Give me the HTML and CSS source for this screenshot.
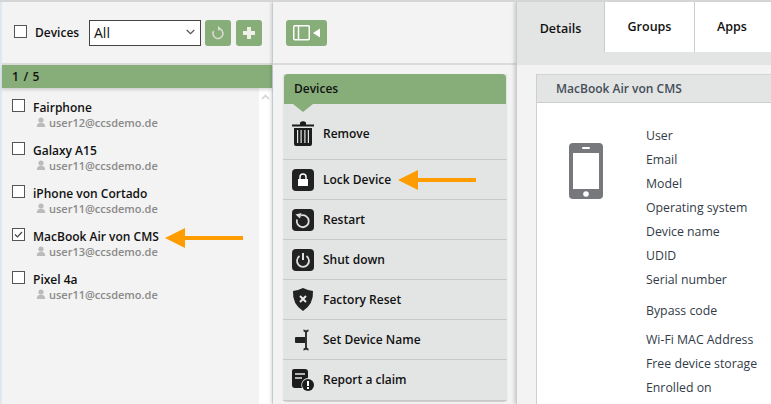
FILE: index.html
```html
<!DOCTYPE html>
<html lang="en">
<head>
<meta charset="utf-8">
<title>Devices</title>
<link rel="stylesheet" href="styles.css">
</head>
<body>
<div class="app">
  <section class="left">
    <div class="left-head">
      <span class="cb head-cb"></span>
      <span class="head-label">Devices</span>
      <div class="select"><span>All</span>
        <svg class="chev" width="9" height="6" viewBox="0 0 9 6"><path d="M.7 1l3.800 3.600L8.300 1" fill="none" stroke="#555" stroke-width="1.200"/></svg>
      </div>
      <button class="gbtn"><svg width="14" height="14" viewBox="0 0 14 14"><path d="M7.800 2.600A5 5 0 1 1 2.600 5" fill="none" stroke="#dcdcd6" stroke-width="1.500"/><path d="M7 0v5l3-2.500z" fill="#dcdcd6"/></svg></button>
      <button class="gbtn"><svg width="14" height="14" viewBox="0 0 14 14"><path d="M5 1h4v4h4v4H9v4H5V9H1V5h4z" fill="#f0f0ea"/></svg></button>
    </div>
    <div class="count">1 / 5</div>
    <div class="list-wrap">
      <div class="list">
        <div class="item"><span class="cb"></span><div><div class="name">Fairphone</div><div class="mail"><svg class="uic" viewBox="0 0 10 10"><circle cx="5" cy="3" r="2.600"/><path d="M.8 10c0-3 1.500-4.200 4.200-4.200S9.200 7 9.200 10z"/></svg>user12@ccsdemo.de</div></div></div>
        <div class="item"><span class="cb"></span><div><div class="name">Galaxy A15</div><div class="mail"><svg class="uic" viewBox="0 0 10 10"><circle cx="5" cy="3" r="2.600"/><path d="M.8 10c0-3 1.500-4.200 4.200-4.200S9.200 7 9.200 10z"/></svg>user11@ccsdemo.de</div></div></div>
        <div class="item"><span class="cb"></span><div><div class="name">iPhone von Cortado</div><div class="mail"><svg class="uic" viewBox="0 0 10 10"><circle cx="5" cy="3" r="2.600"/><path d="M.8 10c0-3 1.500-4.200 4.200-4.200S9.200 7 9.200 10z"/></svg>user11@ccsdemo.de</div></div></div>
        <div class="item"><span class="cb"><svg width="11" height="11" viewBox="0 0 11 11"><path d="M2 5.500l2.500 2.500L9 3" fill="none" stroke="#444" stroke-width="1.200"/></svg></span><div><div class="name">MacBook Air von CMS</div><div class="mail"><svg class="uic" viewBox="0 0 10 10"><circle cx="5" cy="3" r="2.600"/><path d="M.8 10c0-3 1.500-4.200 4.200-4.200S9.200 7 9.200 10z"/></svg>user13@ccsdemo.de</div></div></div>
        <div class="item"><span class="cb"></span><div><div class="name">Pixel 4a</div><div class="mail"><svg class="uic" viewBox="0 0 10 10"><circle cx="5" cy="3" r="2.600"/><path d="M.8 10c0-3 1.500-4.200 4.200-4.200S9.200 7 9.200 10z"/></svg>user11@ccsdemo.de</div></div></div>
      </div>
      <div class="scroll"><svg width="9" height="6" viewBox="0 0 9 6"><path d="M1 5l3.500-3.500L8 5" fill="none" stroke="#d4d4d4" stroke-width="1.600"/></svg></div>
    </div>
    <svg class="arrow arrow-a" width="78" height="20" viewBox="0 0 78 20"><path d="M0 10L20 0v8h58v4H20V20z" fill="#ff9c00"/></svg>
  </section>

  <section class="mid">
    <div class="mid-head">
      <button class="panel-btn"><svg width="28" height="16" viewBox="0 0 28 16"><rect x=".75" y=".75" width="15.500" height="14" rx="1" fill="none" stroke="#fff" stroke-width="1.500"/><path d="M5.500 1v14" stroke="#fff" stroke-width="1.500"/><path d="M27 3.500v9L20 8z" fill="#fff"/></svg></button>
    </div>
    <div class="menu">
      <div class="menu-title">Devices</div>
      <div class="menu-item first">
        <svg class="mi" width="22" height="25" viewBox="0 0 22 25"><path d="M0 3.500h22v2H0zM8 1.500q3-2.500 6 0v2H8zM2 7h18v16q0 2-2 2H4q-2 0-2-2zM5 9v13h1.200V9zM8.500 9v13h1.200V9zM12.300 9v13h1.200V9zM15.800 9v13H17V9z" fill="#1d1d1d" fill-rule="evenodd"/></svg>
        <span>Remove</span>
      </div>
      <div class="menu-item">
        <svg class="mi" width="22" height="22" viewBox="0 0 22 22"><rect width="22" height="22" rx="4" fill="#222"/><path d="M6 10h10v7H6z" fill="#fff"/><path d="M8 10V8a3 3 0 0 1 6 0v2" fill="none" stroke="#fff" stroke-width="1.500"/></svg>
        <span>Lock Device</span>
      </div>
      <div class="menu-item">
        <svg class="mi" width="22" height="22" viewBox="0 0 22 22"><rect width="22" height="22" rx="4" fill="#222"/><path d="M9 6.500a6 6 0 1 1-4 4" fill="none" stroke="#e0e0e0" stroke-width="1.800"/><path d="M3.500 5.500l6-1.500-1.500 5.500z" fill="#e0e0e0"/></svg>
        <span>Restart</span>
      </div>
      <div class="menu-item">
        <svg class="mi" width="22" height="22" viewBox="0 0 22 22"><rect width="22" height="22" rx="4" fill="#222"/><path d="M7.500 7a6 6 0 1 0 7 0" fill="none" stroke="#e0e0e0" stroke-width="1.800"/><path d="M11 4v7" stroke="#e0e0e0" stroke-width="2"/></svg>
        <span>Shut down</span>
      </div>
      <div class="menu-item">
        <svg class="mi" width="22" height="24" viewBox="0 0 22 24"><path d="M11 0q5 2.500 10 3 .8 13-10 20Q.2 16 1 3q5-.5 10-3z" fill="#222"/><path d="M8 8l6 6m0-6l-6 6" stroke="#e8e8e8" stroke-width="2"/></svg>
        <span>Factory Reset</span>
      </div>
      <div class="menu-item">
        <svg class="mi" width="22" height="22" viewBox="0 0 22 22"><path d="M4 8h9v6H4q-1 0-1-1V9q0-1 1-1z" fill="#222"/><path d="M11.500 1.500q1.500 0 2.500 1.500 1-1.500 2.500-1.500M14 3v16M11.500 20.500q1.500 0 2.500-1.500 1 1.500 2.500 1.500" fill="none" stroke="#222" stroke-width="1.800"/></svg>
        <span>Set Device Name</span>
      </div>
      <div class="menu-item">
        <svg class="mi" width="22" height="22" viewBox="0 0 22 22"><path d="M2 0h11q3 0 3 3v6a7 7 0 0 0-6 10H3q-3 0-3-3V2q0-2 2-2z" fill="#1d1d1d"/><path d="M3 5h10M3 9h7" stroke="#e3e5e4" stroke-width="1.500"/><circle cx="16" cy="16" r="6" fill="#1d1d1d"/><path d="M16 12v5" stroke="#fff" stroke-width="2"/><path d="M16 18v2" stroke="#fff" stroke-width="2"/></svg>
        <span>Report a claim</span>
      </div>
    </div>
    <svg class="arrow arrow-b" width="78" height="20" viewBox="0 0 78 20"><path d="M0 10L20 0v8h58v4H20V20z" fill="#ff9c00"/></svg>
  </section>

  <section class="right">
    <nav class="tabs">
      <div class="tab active">Details</div>
      <div class="tab t2">Groups</div>
      <div class="tab t3">Apps</div>
    </nav>
    <div class="tab-strip"></div>
    <div class="card">
      <div class="card-head">MacBook Air von CMS</div>
      <div class="card-body">
        <svg class="phone" width="34" height="56" viewBox="0 0 34 56"><path d="M4 0h26q4 0 4 4v48q0 4-4 4H4q-4 0-4-4V4q0-4 4-4z" fill="#77787c"/><rect x="4" y="10" width="26" height="36" fill="#fff"/><rect x="13" y="4" width="8" height="2" rx="1" fill="#fff"/><circle cx="17" cy="51" r="2.800" fill="#fff"/></svg>
        <ul class="fields">
          <li>User</li><li>Email</li><li>Model</li><li>Operating system</li><li>Device name</li><li>UDID</li><li>Serial number</li>
          <li class="gap-a">Bypass code</li><li class="gap-b">Wi-Fi MAC Address</li><li>Free device storage</li><li>Enrolled on</li>
        </ul>
      </div>
    </div>
  </section>
</div>
</body>
</html>
```

FILE: styles.css
```css
* { box-sizing: border-box; }
html, body { margin: 0; height: 100%; overflow: hidden; }
body { background: #fff; font-family: "Open Sans", "Noto Sans", sans-serif; font-size: 12px; color: #111; }
button { padding: 0; border: 0; font: inherit; }

.app { display: flex; width: 771px; height: 404px; padding-left: 2px; background: #dfe7ef; border-top: 2px solid #d5d5d5; overflow: hidden; }

.left { position: relative; flex: 0 0 270px; background: #f3f3f3; display: flex; flex-direction: column; }
.left-head { height: 63px; border-bottom: 2px solid #dadada; display: flex; align-items: flex-start; padding: 18px 0 0 12px; }
.cb { display: inline-flex; align-items: center; justify-content: center; flex: none; width: 13px; height: 13px; background: #fff; border: 1px solid #555; }
.head-cb { margin: 5px 8px 0 0; }
.head-label { margin-top: 4px; width: 54px; font-size: 12px; font-weight: 600; }
.select { width: 112px; height: 26px; background: #fff; border: 1px solid #444; display: flex; align-items: center; justify-content: space-between; padding: 0 5px 2px 4px; font-size: 14px; }
.gbtn { width: 26px; height: 26px; margin-left: 4px; background: #87ad79; border-radius: 3px; display: flex; align-items: center; justify-content: center; }
.gbtn + .gbtn { margin-left: 5px; }
.count { height: 23px; background: #87ad79; line-height: 23px; padding-left: 10px; font-weight: 600; letter-spacing: .7px; box-shadow: 0 2px 3px rgba(0,0,0,.15); position: relative; }
.list-wrap { flex: 1; display: flex; min-height: 0; }
.list { flex: 1; padding-top: 11px; }
.scroll { flex: 0 0 13px; background: #fff; display: flex; justify-content: center; align-items: flex-start; padding-top: 6px; }
.item { display: flex; height: 43px; padding-left: 10px; }
.item .cb { margin-right: 8px; }
.name { font-size: 12px; font-weight: 600; line-height: 18px; height: 16px; color: #111; }
.mail { display: flex; align-items: center; height: 14px; margin-left: 3px; font-size: 11px; font-weight: 600; color: #8a8a8a; }
.uic { width: 10px; height: 10px; margin-right: 3px; fill: #bbb; }

.arrow { position: absolute; }
.arrow-a { left: 163px; top: 226px; }
.arrow-b { left: 125px; top: 168px; }

.mid { position: relative; flex: 0 0 243px; margin-left: 1px; background: #f3f3f3; box-shadow: -2px 0 3px rgba(0,0,0,.15); }
.mid-head { height: 63px; border-bottom: 2px solid #dadada; padding: 18px 0 0 13px; }
.panel-btn { width: 41px; height: 26px; background: #87ad79; border-radius: 3px; display: flex; align-items: center; justify-content: center; }
.menu { margin: 9px 0 0 10px; width: 224px; background: #e3e5e4; border-radius: 0 0 4px 4px; box-shadow: 0 1px 1px rgba(0,0,0,.15); }
.menu-title { position: relative; margin: 0 1px; height: 30px; background: #87ad79; border-radius: 4px 4px 0 0; line-height: 30px; padding-left: 10px; font-size: 12px; font-weight: 600; }
.menu-title::after { content: ""; position: absolute; left: 9px; top: 30px; border: 10.500px solid transparent; border-top: 8.500px solid #87ad79; border-bottom: 0; }
.menu-item { display: flex; align-items: center; height: 40px; padding-left: 9px; border-bottom: 1px solid #c8c8c8; font-weight: 600; font-size: 12px; }
.menu-item:last-child { height: 41px; padding-bottom: 1px; }
.menu-item.first { height: 56px; padding-top: 3px; }
.mi { flex: none; margin-right: 9px; }

.right { flex: 1; background: #f3f3f3; border-left: 1px solid #ccc; box-shadow: -2px 0 3px rgba(0,0,0,.15); position: relative; }
.tabs { display: flex; height: 50px; background: #fff; }
.tab { text-align: center; font-size: 12.500px; font-weight: 600; line-height: 49px; border-right: 1px solid #ccc; }
.tab.active { flex: 0 0 88px; background: #e3e5e4; line-height: 53px; }
.t2 { flex: 0 0 90px; }
.t3 { flex: 1; border-right: 0; text-align: left; padding-left: 22px; }
.tab-strip { height: 13px; background: #e3e5e4; }
.card { margin: 9px 0 0 19px; border-left: 1px solid #cfcfcf; background: #fff; height: 330px; }
.card-head { height: 29px; background: #e3e5e4; border-top: 1px solid #d5d5d5; border-bottom: 1px solid #ccc; line-height: 27px; padding-left: 19px; color: #454d59; font-weight: 600; font-size: 12px; }
.card-body { display: flex; padding: 21px 0 0 32px; }
.phone { flex: none; margin-top: 19px; }
.fields { list-style: none; margin: 0 0 0 43px; padding: 0; color: #333b47; font-size: 12.300px; white-space: nowrap; }
.fields li { height: 24px; line-height: 24px; }
.fields li.gap-a { margin-top: 7px; }
.fields li.gap-b { margin-top: 5px; }
```
